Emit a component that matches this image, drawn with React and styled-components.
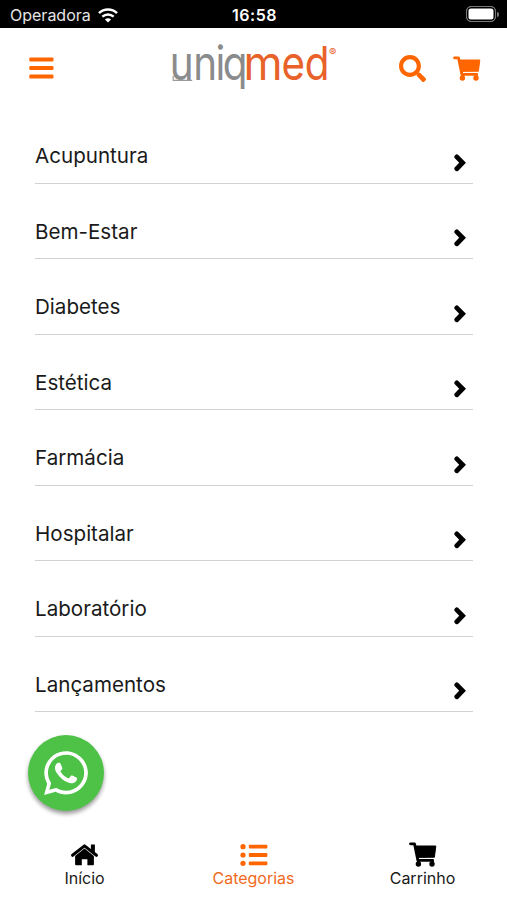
import React from "react";
import styled, { createGlobalStyle } from "styled-components";
import { FaSearch, FaWhatsapp } from "react-icons/fa";

const categories = [
    "Acupuntura",
    "Bem-Estar",
    "Diabetes",
    "Estética",
    "Farmácia",
    "Hospitalar",
    "Laboratório",
    "Lançamentos",
];

function WifiIcon() {
    return (
        <svg width="20" height="15" viewBox="0 0 20 15" fill="none" stroke="#fff">
            <path d="M1 5.2C6 .3 14 .3 19 5.2" strokeWidth="2.5" />
            <path d="M4.3 8.7c3.3-3 8.1-3 11.4 0" strokeWidth="2.4" />
            <path d="M10 14.6 6.9 11.5c1.8-1.6 4.4-1.6 6.2 0z" fill="#fff" stroke="none" />
        </svg>
    );
}

function MenuIcon() {
    return (
        <svg width="25" height="22" viewBox="0 0 25 22" fill="currentColor">
            <rect x="0.3" y="0.4" width="24.2" height="4" rx="1.2" />
            <rect x="0.3" y="9" width="24.2" height="4" rx="1.2" />
            <rect x="0.3" y="17.5" width="24.2" height="4" rx="1.2" />
        </svg>
    );
}

function CartIcon() {
    return (
        <svg width="28" height="25" viewBox="0 0 28 25" fill="none" stroke="currentColor">
            <path
                d="M1.5 1.8h4l3.4 16.6h14.8"
                strokeWidth="2.8"
                strokeLinecap="round"
                strokeLinejoin="round"
            />
            <path d="M6.4 4h20.4l-1.4 11.2-16.6.2z" fill="currentColor" strokeWidth="1" strokeLinejoin="round" />
            <path d="M9.4 18v4M23.4 18v4" strokeWidth="2.6" />
            <circle cx="9.4" cy="22" r="2.7" fill="currentColor" stroke="none" />
            <circle cx="23" cy="22" r="2.7" fill="currentColor" stroke="none" />
        </svg>
    );
}

function HomeIcon() {
    return (
        <svg width="27" height="22" viewBox="0 0 27 22" fill="currentColor">
            <path
                d="M1.6 11.3 13.5 1.9l11.9 9.4"
                fill="none"
                stroke="currentColor"
                strokeWidth="3"
                strokeLinecap="round"
                strokeLinejoin="round"
            />
            <path d="M19.9.4h4v8.4l-4-3.1z" />
            <path d="M13.5 4.6 22.9 12v8.3a1 1 0 0 1-1 1h-5.5v-6.1h-5.6v6.1H5.1a1 1 0 0 1-1-1V12z" />
        </svg>
    );
}

function ListIcon() {
    return (
        <svg width="28" height="22" viewBox="0 0 28 22" fill="currentColor">
            {[2.7, 11, 19.3].map((y) => (
                <React.Fragment key={y}>
                    <circle cx="3" cy={y} r="2.6" />
                    <rect x="8.8" y={y - 1.9} width="18.6" height="3.8" rx="1" />
                </React.Fragment>
            ))}
        </svg>
    );
}

function ChevronIcon() {
    return (
        <svg width="12" height="18" viewBox="0 0 12 18">
            <path
                d="M2.8 2.9 8.6 8.8l-5.8 5.9"
                fill="none"
                stroke="currentColor"
                strokeWidth="4.8"
                strokeLinecap="round"
            />
        </svg>
    );
}

function Logo() {
    return (
        <LogoSvg width="168" height="50" viewBox="0 0 168 50" role="img" aria-label="uniqmed">
            <LogoText transform="translate(1.5 37) scale(0.86 1)" x="-3.3 24.2 50 58.4" fill="#8a8b8c">
                uniq
            </LogoText>
            <LogoText transform="translate(72.5 37) scale(0.95 1)" fill="#e8622a">
                m
            </LogoText>
            <LogoText transform="translate(110.5 37) scale(0.86 1)" x="0 27" fill="#e8622a">
                ed
            </LogoText>
            <Registered x="158" y="12.5" fill="#e8622a">
                ®
            </Registered>
            <path d="M2.2 33v4.4h19" fill="none" stroke="#9a9b9c" strokeWidth="1.2" />
        </LogoSvg>
    );
}

const tabs = [
    { label: "Início", icon: HomeIcon },
    { label: "Categorias", icon: ListIcon, active: true },
    { label: "Carrinho", icon: CartIcon },
];

function App() {
    return (
        <>
            <GlobalStyle />
            <Screen>
                <StatusBar>
                    <Carrier>
                        Operadora
                        <WifiIcon />
                    </Carrier>
                    <Clock>16:58</Clock>
                    <BatterySlot>
                        <Battery />
                        <BatteryTip />
                    </BatterySlot>
                </StatusBar>
                <Header>
                    <HeaderSide>
                        <MenuIcon />
                    </HeaderSide>
                    <Logo />
                    <HeaderSide $end>
                        <FaSearch size={27} />
                        <CartIcon />
                    </HeaderSide>
                </Header>
                <List>
                    {categories.map((name) => (
                        <Row key={name}>
                            <RowName>{name}</RowName>
                            <ChevronIcon />
                        </Row>
                    ))}
                </List>
                <WhatsappButton aria-label="WhatsApp">
                    <FaWhatsapp size={50} />
                </WhatsappButton>
                <TabBar>
                    {tabs.map(({ label, icon: Icon, active }) => (
                        <Tab key={label} $active={active}>
                            <TabIcon $active={active}>
                                <Icon />
                            </TabIcon>
                            {label}
                        </Tab>
                    ))}
                </TabBar>
            </Screen>
        </>
    );
}

const GlobalStyle = createGlobalStyle`
    * {
        box-sizing: border-box;
    }
    body {
        margin: 0;
        background: #fff;
        font-family: Inter, "Liberation Sans", sans-serif;
    }
    svg {
        display: block;
        flex-shrink: 0;
    }
`;
const Screen = styled.div`
    display: flex;
    flex-direction: column;
    height: 900px;
    overflow: hidden;
    background: #fff;
`;
const StatusBar = styled.div`
    display: grid;
    grid-template-columns: 1fr auto 1fr;
    align-items: center;
    height: 28px;
    padding: 2px 8px 0 10px;
    background: #000;
    color: #fff;
`;
const Carrier = styled.div`
    display: flex;
    align-items: center;
    gap: 7px;
    font-size: 16px;
    color: #e4e4e4;
`;
const Clock = styled.div`
    font-size: 16px;
    font-weight: 600;
    letter-spacing: 0.5px;
`;
const BatterySlot = styled.div`
    display: flex;
    align-items: center;
    justify-content: flex-end;
    gap: 1px;
    margin-top: -2px;
`;
const Battery = styled.div`
    width: 30px;
    height: 16px;
    border: 1px solid #777;
    border-radius: 5px;
    background: #fff;
    box-shadow: inset 0 0 0 1.5px #000;
`;
const BatteryTip = styled.div`
    width: 2px;
    height: 5px;
    border-radius: 0 2px 2px 0;
    background: #777;
`;
const Header = styled.header`
    display: grid;
    grid-template-columns: 1fr auto 1fr;
    align-items: center;
    height: 80px;
    padding: 0 26px 0 29px;
    color: #ff6600;
`;
const HeaderSide = styled.div`
    display: flex;
    align-items: center;
    justify-content: ${(props) => (props.$end ? "flex-end" : "flex-start")};
    gap: 27px;
`;
const LogoSvg = styled.svg`
    overflow: visible;
`;
const LogoText = styled.text`
    font-family: Inter, sans-serif;
    font-size: 47px;
    font-weight: 400;
`;
const Registered = styled.text`
    font-family: Inter, sans-serif;
    font-size: 11px;
`;
const List = styled.ul`
    margin: 0;
    padding: 0 34px 0 35px;
    list-style: none;
`;
const Row = styled.li`
    display: flex;
    align-items: flex-end;
    justify-content: space-between;
    height: 75.5px;
    padding: 0 7px 11px 0;
    border-bottom: 1.5px solid #d2d2d2;
    color: #000;
`;
const RowName = styled.span`
    margin-bottom: 2.4px;
    font-size: 20.6px;
    line-height: 26px;
    color: #1a1a1a;
`;
const WhatsappButton = styled.button`
    display: flex;
    align-items: center;
    justify-content: center;
    width: 76px;
    height: 76px;
    margin: 23px 0 0 28px;
    padding: 0;
    border: 0;
    border-radius: 50%;
    background: #4dc247;
    box-shadow: 0 3px 4px rgba(0, 0, 0, 0.4);
    color: #fff;
`;
const TabBar = styled.nav`
    display: grid;
    grid-template-columns: repeat(3, 1fr);
    margin-top: auto;
    height: 62px;
`;
const Tab = styled.div`
    display: flex;
    flex-direction: column;
    align-items: center;
    font-size: 16px;
    line-height: 20px;
    color: ${(props) => (props.$active ? "#f26a21" : "#1a1a1a")};
`;
const TabIcon = styled.span`
    display: flex;
    align-items: center;
    height: 30px;
    padding-top: 3px;
    color: ${(props) => (props.$active ? "#ff6600" : "#000")};
`;

export default App;
